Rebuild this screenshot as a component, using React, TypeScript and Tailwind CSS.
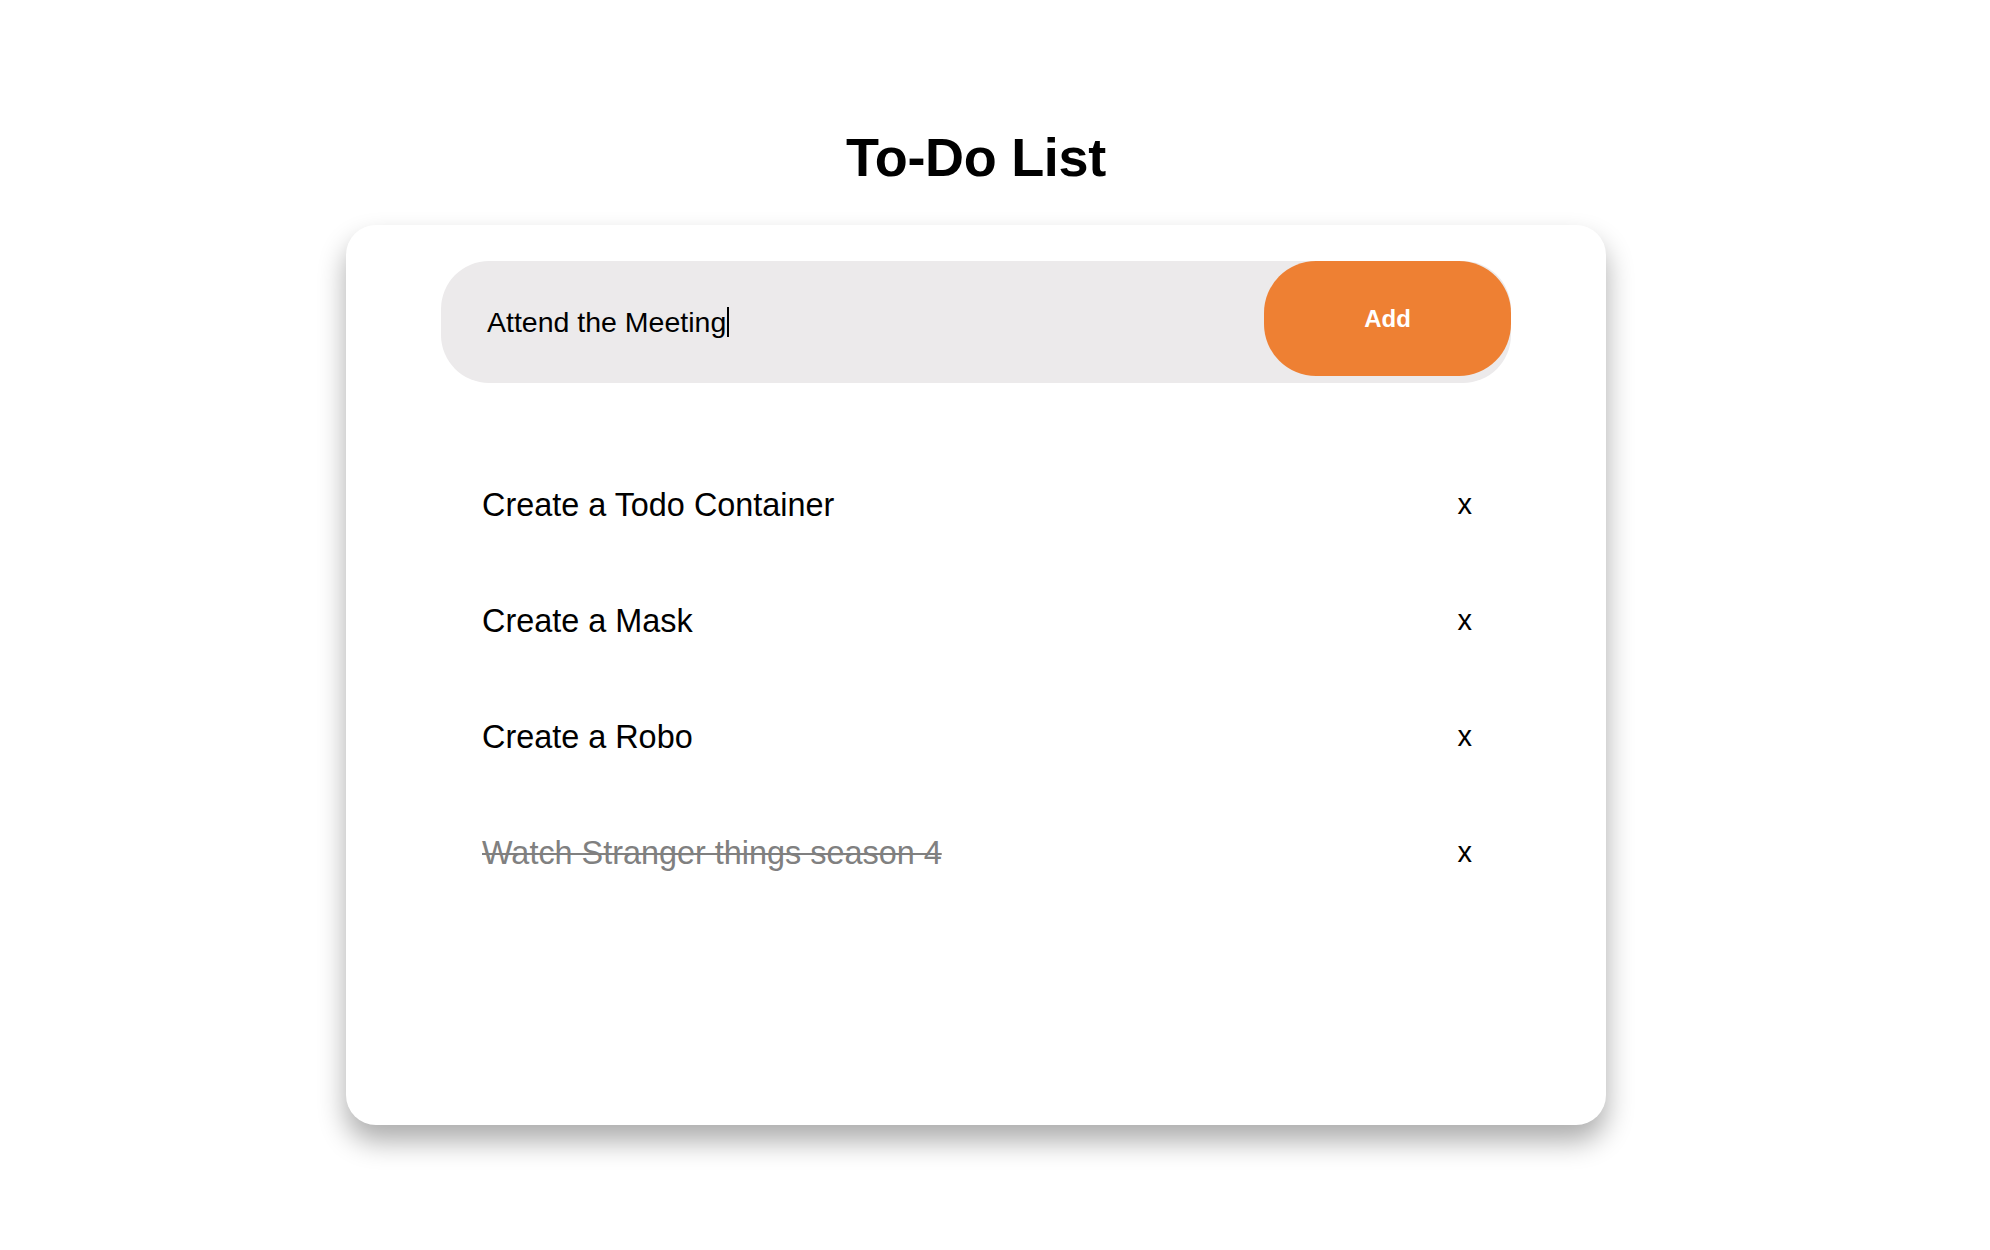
import React from 'react';

const todos = [
    { text: 'Create a Todo Container', done: false },
    { text: 'Create a Mask', done: false },
    { text: 'Create a Robo', done: false },
    { text: 'Watch Stranger things season 4', done: true },
];

export default function App() {
    return (
        <main
            className="min-h-screen bg-white pt-[126px] pr-[38px] flex flex-col items-center text-black"
            style={{ fontFamily: '"Liberation Sans", Arial, Helvetica, sans-serif' }}
        >
            <h1 className="text-[54px] leading-[62px] font-bold tracking-[-0.3px] mb-[37px]">To-Do List</h1>
            <div className="w-[1260px] h-[900px] bg-white rounded-[30px] shadow-[0_16px_28px_rgba(0,0,0,0.33)] px-[95px] pt-[36px]">
                <div className="flex items-start justify-between h-[122px] rounded-[48px] bg-[#eceaeb]">
                    <div className="flex items-center h-[122px] pl-[46px] text-[28.5px]">
                        <span>Attend the Meeting</span>
                        <span className="inline-block w-[2px] h-[30px] bg-black ml-[1px]"></span>
                    </div>
                    <button className="w-[247px] h-[115px] rounded-[52px] bg-[#ee8033] text-white text-[24px] font-bold">
                        Add
                    </button>
                </div>
                <ul className="mt-[64px] flex flex-col">
                    {todos.map((todo) => (
                        <li key={todo.text} className="flex items-center justify-between h-[116px] pl-[41px] pr-[39px]">
                            <span
                                className={
                                    todo.done
                                        ? 'text-[32.4px] text-[#808080] line-through decoration-2'
                                        : 'text-[32.4px] text-black'
                                }
                            >
                                {todo.text}
                            </span>
                            <button className="text-[29px] leading-none text-black -mt-[2px]">x</button>
                        </li>
                    ))}
                </ul>
            </div>
        </main>
    );
}
